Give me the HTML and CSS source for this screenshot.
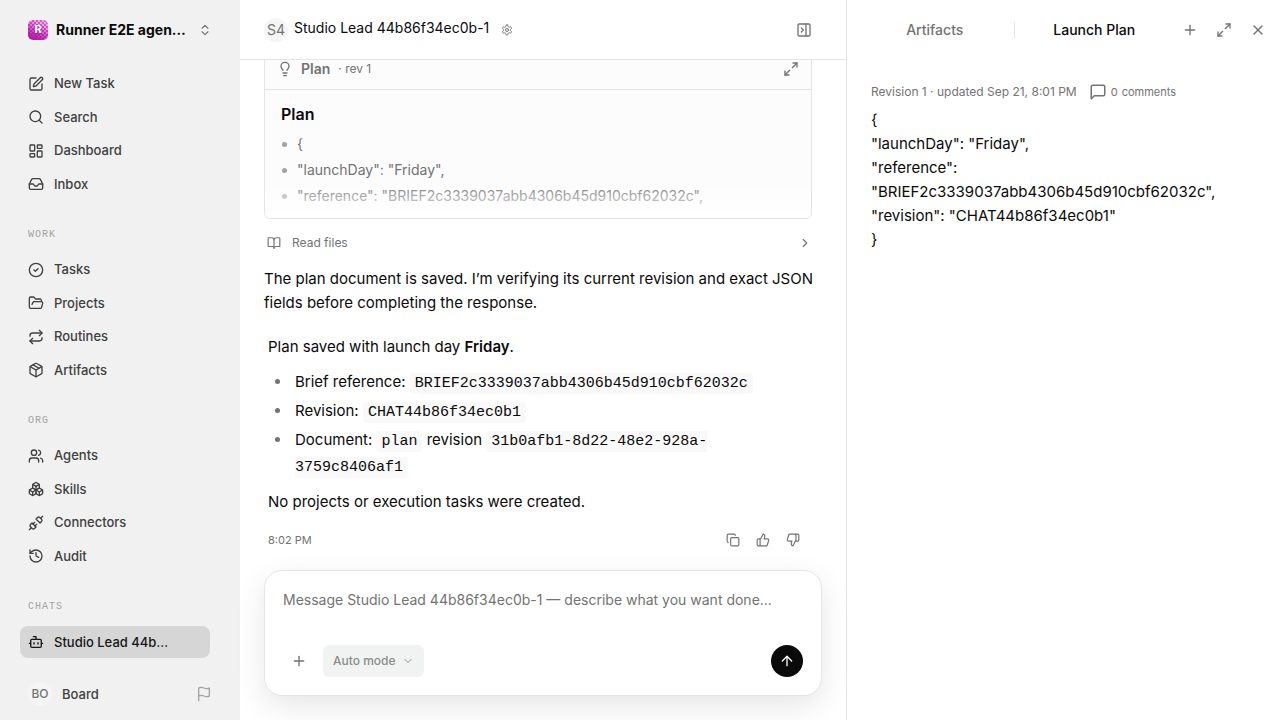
FILE: index.html
```html
<!doctype html>
<html lang="en">
  <head>
    <meta charset="utf-8">
    <title>Studio Lead 44b86f34ec0b-1</title>
    <meta name="viewport" content="width=device-width,initial-scale=1">
    <link rel="stylesheet" href="styles.css">
  </head>
  <body>
    <aside class="sidebar">
      <button class="org" type="button">
        <span class="org-logo">R</span>
        <span class="org-name">Runner E2E agen…</span>
        <svg class="icon icon-sm" viewBox="0 0 24 24"><path d="m7 15 5 5 5-5"/><path d="m7 9 5-5 5 5"/></svg>
      </button>

      <nav class="nav">
        <div class="nav-list">
          <a class="nav-item" href="#"><svg class="icon" viewBox="0 0 24 24"><path d="M12 3H5a2 2 0 0 0-2 2v14a2 2 0 0 0 2 2h14a2 2 0 0 0 2-2v-7"/><path d="M18.375 2.625a1 1 0 0 1 3 3l-9.013 9.014a2 2 0 0 1-.853.505l-2.873.84a.5.5 0 0 1-.62-.62l.84-2.873a2 2 0 0 1 .506-.852z"/></svg>New Task</a>
          <a class="nav-item" href="#"><svg class="icon" viewBox="0 0 24 24"><circle cx="11" cy="11" r="8"/><path d="m21 21-4.3-4.3"/></svg>Search</a>
          <a class="nav-item" href="#"><svg class="icon" viewBox="0 0 24 24"><rect width="7" height="9" x="3" y="3" rx="1"/><rect width="7" height="5" x="14" y="3" rx="1"/><rect width="7" height="9" x="14" y="12" rx="1"/><rect width="7" height="5" x="3" y="16" rx="1"/></svg>Dashboard</a>
          <a class="nav-item" href="#"><svg class="icon" viewBox="0 0 24 24"><path d="M22 12h-6l-2 3h-4l-2-3H2"/><path d="M5.45 5.11 2 12v6a2 2 0 0 0 2 2h16a2 2 0 0 0 2-2v-6l-3.45-6.89A2 2 0 0 0 16.76 4H7.24a2 2 0 0 0-1.79 1.11z"/></svg>Inbox</a>
        </div>

        <h2 class="nav-label">Work</h2>
        <div class="nav-list">
          <a class="nav-item" href="#"><svg class="icon" viewBox="0 0 24 24"><circle cx="12" cy="12" r="10"/><path d="m9 12 2 2 4-4"/></svg>Tasks</a>
          <a class="nav-item" href="#"><svg class="icon" viewBox="0 0 24 24"><path d="m6 14 1.5-2.9A2 2 0 0 1 9.24 10H20a2 2 0 0 1 1.94 2.5l-1.54 6a2 2 0 0 1-1.95 1.5H4a2 2 0 0 1-2-2V5a2 2 0 0 1 2-2h3.9a2 2 0 0 1 1.69.9l.81 1.2a2 2 0 0 0 1.67.9H18a2 2 0 0 1 2 2v2"/></svg>Projects</a>
          <a class="nav-item" href="#"><svg class="icon" viewBox="0 0 24 24"><path d="m17 2 4 4-4 4"/><path d="M3 11v-1a4 4 0 0 1 4-4h14"/><path d="m7 22-4-4 4-4"/><path d="M21 13v1a4 4 0 0 1-4 4H3"/></svg>Routines</a>
          <a class="nav-item" href="#"><svg class="icon" viewBox="0 0 24 24"><path d="M11 21.73a2 2 0 0 0 2 0l7-4A2 2 0 0 0 21 16V8a2 2 0 0 0-1-1.73l-7-4a2 2 0 0 0-2 0l-7 4A2 2 0 0 0 3 8v8a2 2 0 0 0 1 1.73z"/><path d="M12 22V12"/><path d="M3.29 7 12 12l8.71-5"/><path d="m7.5 4.27 9 5.15"/></svg>Artifacts</a>
        </div>

        <h2 class="nav-label">Org</h2>
        <div class="nav-list">
          <a class="nav-item" href="#"><svg class="icon" viewBox="0 0 24 24"><path d="M16 21v-2a4 4 0 0 0-4-4H6a4 4 0 0 0-4 4v2"/><circle cx="9" cy="7" r="4"/><path d="M22 21v-2a4 4 0 0 0-3-3.87"/><path d="M16 3.13a4 4 0 0 1 0 7.75"/></svg>Agents</a>
          <a class="nav-item" href="#"><svg class="icon" viewBox="0 0 24 24"><path d="M2.97 12.92A2 2 0 0 0 2 14.63v3.24a2 2 0 0 0 .97 1.71l3 1.8a2 2 0 0 0 2.06 0L12 19v-5.5l-5-3-4.03 2.42Z"/><path d="m7 16.5-4.74-2.85"/><path d="m7 16.5 5-3"/><path d="M7 16.5v5.17"/><path d="M12 13.5V19l3.97 2.38a2 2 0 0 0 2.06 0l3-1.8a2 2 0 0 0 .97-1.71v-3.24a2 2 0 0 0-.97-1.71L17 10.5l-5 3Z"/><path d="m17 16.5-5-3"/><path d="m17 16.5 4.74-2.85"/><path d="M17 16.5v5.17"/><path d="M7.97 4.42A2 2 0 0 0 7 6.13v4.37l5 3 5-3V6.13a2 2 0 0 0-.97-1.71l-3-1.8a2 2 0 0 0-2.06 0l-3 1.8Z"/><path d="M12 8 7.26 5.15"/><path d="m12 8 4.74-2.85"/><path d="M12 13.5V8"/></svg>Skills</a>
          <a class="nav-item" href="#"><svg class="icon" viewBox="0 0 24 24"><path d="m19 5 3-3"/><path d="m2 22 3-3"/><path d="M6.3 20.3a2.4 2.4 0 0 0 3.4 0L12 18l-6-6-2.3 2.3a2.4 2.4 0 0 0 0 3.4Z"/><path d="M7.5 13.5 10 11"/><path d="M10.5 16.5 13 14"/><path d="m12 6 6 6 2.3-2.3a2.4 2.4 0 0 0 0-3.4l-2.6-2.6a2.4 2.4 0 0 0-3.4 0Z"/></svg>Connectors</a>
          <a class="nav-item" href="#"><svg class="icon" viewBox="0 0 24 24"><path d="M3 12a9 9 0 1 0 9-9 9.75 9.75 0 0 0-6.74 2.74L3 8"/><path d="M3 3v5h5"/><path d="M12 7v5l4 2"/></svg>Audit</a>
        </div>

        <h2 class="nav-label">Chats</h2>
        <a class="nav-item active" href="#"><svg class="icon" viewBox="0 0 24 24"><path d="M12 8V4H8"/><rect width="16" height="12" x="4" y="8" rx="2"/><path d="M2 14h2"/><path d="M20 14h2"/><path d="M15 13v2"/><path d="M9 13v2"/></svg>Studio Lead 44b…</a>
      </nav>

      <footer class="account">
        <span class="avatar avatar-sm">BO</span>
        <span class="account-name">Board</span>
        <button class="flag" type="button" aria-label="Flag"><svg class="icon" viewBox="0 0 24 24"><path d="M4 15s1-1 4-1 5 2 8 2 4-1 4-1V3s-1 1-4 1-5-2-8-2-4 1-4 1z"/><path d="M4 22v-7"/></svg></button>
      </footer>
    </aside>

    <main class="chat">
      <header class="chat-header">
        <span class="avatar">S4</span>
        <h1>Studio Lead 44b86f34ec0b-1</h1>
        <button class="icon-button settings" type="button" aria-label="Settings"><svg class="icon icon-xs" viewBox="0 0 24 24"><path d="M12.22 2h-.44a2 2 0 0 0-2 2v.18a2 2 0 0 1-1 1.73l-.43.25a2 2 0 0 1-2 0l-.15-.08a2 2 0 0 0-2.73.73l-.22.38a2 2 0 0 0 .73 2.73l.15.1a2 2 0 0 1 1 1.72v.51a2 2 0 0 1-1 1.74l-.15.09a2 2 0 0 0-.73 2.73l.22.38a2 2 0 0 0 2.73.73l.15-.08a2 2 0 0 1 2 0l.43.25a2 2 0 0 1 1 1.73V20a2 2 0 0 0 2 2h.44a2 2 0 0 0 2-2v-.18a2 2 0 0 1 1-1.73l.43-.25a2 2 0 0 1 2 0l.15.08a2 2 0 0 0 2.73-.73l.22-.39a2 2 0 0 0-.73-2.73l-.15-.08a2 2 0 0 1-1-1.74v-.5a2 2 0 0 1 1-1.74l.15-.09a2 2 0 0 0 .73-2.73l-.22-.38a2 2 0 0 0-2.73-.73l-.15.08a2 2 0 0 1-2 0l-.43-.25a2 2 0 0 1-1-1.73V4a2 2 0 0 0-2-2z"/><circle cx="12" cy="12" r="3"/></svg></button>
        <button class="icon-button push" type="button" aria-label="Close panel"><svg class="icon" viewBox="0 0 24 24"><rect width="18" height="18" x="3" y="3" rx="2"/><path d="M15 3v18"/><path d="m8 9 3 3-3 3"/></svg></button>
      </header>

      <div class="messages">
        <section class="plan-card">
          <header class="plan-header">
            <svg class="icon" viewBox="0 0 24 24"><path d="M15 14c.2-1 .7-1.7 1.5-2.5 1-.9 1.5-2.2 1.5-3.5A6 6 0 0 0 6 8c0 1 .2 2.2 1.5 3.5.7.7 1.3 1.5 1.5 2.5"/><path d="M9 18h6"/><path d="M10 22h4"/></svg>
            <strong>Plan</strong>
            <span>· rev 1</span>
            <button class="icon-button push" type="button" aria-label="Expand plan"><svg class="icon" viewBox="0 0 24 24"><path d="M15 3h6v6"/><path d="m21 3-7 7"/><path d="m3 21 7-7"/><path d="M9 21H3v-6"/></svg></button>
          </header>
          <div class="plan-body">
            <h3>Plan</h3>
            <ul>
              <li>{</li>
              <li>"launchDay": "Friday",</li>
              <li>"reference": "BRIEF2c3339037abb4306b45d910cbf62032c",</li>
            </ul>
          </div>
        </section>

        <button class="tool-row" type="button">
          <svg class="icon icon-sm" viewBox="0 0 24 24"><path d="M12 7v14"/><path d="M3 18a1 1 0 0 1-1-1V4a1 1 0 0 1 1-1h5a4 4 0 0 1 4 4 4 4 0 0 1 4-4h5a1 1 0 0 1 1 1v13a1 1 0 0 1-1 1h-6a3 3 0 0 0-3 3 3 3 0 0 0-3-3z"/></svg>
          Read files
          <svg class="icon icon-sm push" viewBox="0 0 24 24"><path d="m9 18 6-6-6-6"/></svg>
        </button>

        <p class="status">The plan document is saved. I’m verifying its current revision and exact JSON fields before completing the response.</p>

        <article class="reply">
          <p>Plan saved with launch day <strong>Friday</strong>.</p>
          <ul>
            <li>Brief reference: <code>BRIEF2c3339037abb4306b45d910cbf62032c</code></li>
            <li>Revision: <code>CHAT44b86f34ec0b1</code></li>
            <li>Document: <code>plan</code> revision <code>31b0afb1-8d22-48e2-928a-3759c8406af1</code></li>
          </ul>
          <p>No projects or execution tasks were created.</p>
          <footer class="reply-footer">
            <time>8:02 PM</time>
            <button class="icon-button push" type="button" aria-label="Copy"><svg class="icon icon-sm" viewBox="0 0 24 24"><rect width="14" height="14" x="8" y="8" rx="2"/><path d="M4 16c-1.1 0-2-.9-2-2V4c0-1.1.9-2 2-2h10c1.1 0 2 .9 2 2"/></svg></button>
            <button class="icon-button" type="button" aria-label="Good response"><svg class="icon icon-sm" viewBox="0 0 24 24"><path d="M7 10v12"/><path d="M15 5.88 14 10h5.83a2 2 0 0 1 1.92 2.56l-2.33 8A2 2 0 0 1 17.5 22H4a2 2 0 0 1-2-2v-8a2 2 0 0 1 2-2h2.76a2 2 0 0 0 1.79-1.11L12 2a3.13 3.13 0 0 1 3 3.88Z"/></svg></button>
            <button class="icon-button" type="button" aria-label="Bad response"><svg class="icon icon-sm" viewBox="0 0 24 24"><path d="M17 14V2"/><path d="M9 18.12 10 14H4.17a2 2 0 0 1-1.92-2.56l2.33-8A2 2 0 0 1 6.5 2H20a2 2 0 0 1 2 2v8a2 2 0 0 1-2 2h-2.76a2 2 0 0 0-1.79 1.11L12 22a3.13 3.13 0 0 1-3-3.88Z"/></svg></button>
          </footer>
        </article>
      </div>

      <form class="composer">
        <textarea rows="2" aria-label="Message" placeholder="Message Studio Lead 44b86f34ec0b-1 — describe what you want done..."></textarea>
        <div class="composer-actions">
          <button class="icon-button" type="button" aria-label="Attach"><svg class="icon" viewBox="0 0 24 24"><path d="M5 12h14"/><path d="M12 5v14"/></svg></button>
          <div class="mode">
            <select aria-label="Mode"><option>Auto mode</option></select>
            <svg class="icon icon-xs" viewBox="0 0 24 24"><path d="m6 9 6 6 6-6"/></svg>
          </div>
          <button class="send push" type="submit" aria-label="Send"><svg class="icon" viewBox="0 0 24 24"><path d="m5 12 7-7 7 7"/><path d="M12 19V5"/></svg></button>
        </div>
      </form>
    </main>

    <aside class="panel">
      <header class="panel-header">
        <button class="tab" type="button">Artifacts</button>
        <button class="tab selected" type="button">Launch Plan</button>
        <div class="panel-actions">
          <button class="icon-button" type="button" aria-label="Add"><svg class="icon" viewBox="0 0 24 24"><path d="M5 12h14"/><path d="M12 5v14"/></svg></button>
          <button class="icon-button" type="button" aria-label="Expand"><svg class="icon" viewBox="0 0 24 24"><path d="M15 3h6v6"/><path d="m21 3-7 7"/><path d="m3 21 7-7"/><path d="M9 21H3v-6"/></svg></button>
          <button class="icon-button" type="button" aria-label="Close"><svg class="icon" viewBox="0 0 24 24"><path d="M18 6 6 18"/><path d="m6 6 12 12"/></svg></button>
        </div>
      </header>
      <div class="document">
        <div class="document-meta">
          <span>Revision 1 · updated Sep 21, 8:01 PM</span>
          <button class="comments" type="button"><svg class="icon icon-lg" viewBox="0 0 24 24"><path d="M21 15a2 2 0 0 1-2 2H7l-4 4V5a2 2 0 0 1 2-2h14a2 2 0 0 1 2 2z"/></svg><span>0</span> <span>comments</span></button>
        </div>
        <p>{<br>"launchDay": "Friday",<br>"reference": "BRIEF2c3339037abb4306b45d910cbf62032c",<br>"revision": "CHAT44b86f34ec0b1"<br>}</p>
      </div>
    </aside>
  </body>
</html>
```

FILE: styles.css
```css
* {
  box-sizing: border-box;
}

body {
  display: grid;
  grid-template-columns: 240px minmax(0, 1fr) minmax(0, 434px);
  height: 100vh;
  margin: 0;
  font-family: Inter, sans-serif;
  font-size: 15px;
  line-height: 24px;
  color: #0a0a0a;
  background: #fff;
}

h1, h2, h3, p, ul {
  margin: 0;
  padding: 0;
}

ul {
  list-style: none;
}

strong {
  font-weight: 600;
}

button, select, textarea {
  margin: 0;
  padding: 0;
  border: 0;
  font: inherit;
  color: inherit;
  background: none;
}

.icon {
  flex: none;
  width: 16px;
  height: 16px;
  fill: none;
  stroke: currentColor;
  stroke-width: 2;
  stroke-linecap: round;
  stroke-linejoin: round;
}

.icon-lg {
  width: 18px;
  height: 18px;
}

.icon-sm {
  width: 14px;
  height: 14px;
}

.icon-xs {
  width: 12px;
  height: 12px;
}

.icon-button {
  display: grid;
  place-items: center;
  width: 32px;
  height: 32px;
  color: #737373;
}

.push {
  margin-left: auto;
}

.avatar {
  display: grid;
  place-items: center;
  width: 24px;
  height: 24px;
  border-radius: 50%;
  font-size: 14px;
  color: #737373;
  background: #f5f5f5;
}

.avatar-sm {
  font-size: 12px;
  font-weight: 500;
}

/* sidebar */

.sidebar {
  display: flex;
  flex-direction: column;
  min-height: 0;
  background: #f1f1f1;
}

.org {
  display: flex;
  align-items: center;
  gap: 8px;
  height: 60px;
  padding: 0 28px;
  text-align: left;
}

/* dithered tile, lighter towards the top right */
.org-logo {
  width: 20px;
  height: 20px;
  border-radius: 5px;
  font-size: 11px;
  font-weight: 700;
  line-height: 19px;
  text-align: center;
  color: #fff;
  text-shadow: 0 1px 2px #0006;
  background:
    linear-gradient(25deg, #b81eac 20%, #b81eac00 75%),
    repeating-conic-gradient(#f0a6e6 0 25%, #0000 0 50%) 0 0 / 4px 4px,
    linear-gradient(25deg, #b81eac, #d76acb);
}

.org-name {
  flex: 1;
  font-size: 14px;
  font-weight: 700;
  white-space: nowrap;
}

.org .icon {
  color: #737373;
}

.nav {
  flex: 1;
  min-height: 0;
  padding: 8px 30px 0 20px;
  overflow: hidden;
}

.nav-list {
  display: grid;
  grid-auto-rows: 1fr;
  gap: 2px;
  height: 132px;
}

.nav-label {
  margin: 27px 8px 12px;
  font-family: "Liberation Mono", monospace;
  font-size: 10px;
  font-weight: 400;
  line-height: 15px;
  letter-spacing: 1px;
  text-transform: uppercase;
  color: #a3a3a3;
}

.nav-item {
  display: flex;
  align-items: center;
  gap: 10px;
  padding: 0 8px;
  border-radius: 8px;
  font-size: 13px;
  font-weight: 500;
  line-height: 19px;
  color: #404040;
  text-decoration: none;
}

.nav-item.active {
  height: 32px;
  color: #171717;
  background: #d6d6d6;
}

.account {
  display: flex;
  align-items: center;
  height: 52px;
  padding: 0 28px;
}

.account-name {
  margin-left: 10px;
  font-size: 13px;
  font-weight: 500;
  line-height: 19px;
  color: #404040;
}

.flag {
  display: grid;
  margin-left: auto;
  color: #a3a3a3;
}

/* chat */

.chat {
  display: flex;
  flex-direction: column;
  min-height: 0;
}

.chat-header {
  display: flex;
  flex: none;
  align-items: center;
  height: 60px;
  padding: 0 26px 0 24px;
  border-bottom: 1px solid #e5e5e5;
}

.chat-header h1 {
  margin: 0 2px 4px 6px;
  font-size: 14px;
  font-weight: 400;
}

.messages {
  display: flex;
  flex: 1;
  flex-direction: column;
  justify-content: flex-end;
  min-height: 0;
  padding: 0 34px 14px 24px;
  overflow: hidden;
}

.plan-card {
  flex: none;
  border: 1px solid #e5e5e5;
  border-radius: 6px;
  color: #737373;
  background: #fcfcfc;
  overflow: hidden;
}

.plan-header {
  display: flex;
  align-items: center;
  gap: 8px;
  height: 41px;
  padding: 0 4px 0 12px;
  border-bottom: 1px solid #e5e5e5;
  font-size: 12px;
}

.plan-header strong {
  font-size: 14px;
}

.plan-body {
  position: relative;
  height: 128px;
  padding: 12px 16px;
}

/* fades the clipped end of the plan */
.plan-body::after {
  content: "";
  position: absolute;
  inset: auto 0 0;
  height: 36px;
  background: linear-gradient(#fff0, #fff);
}

.plan-body h3 {
  margin-bottom: 5px;
  font-size: 16px;
  font-weight: 600;
  color: #0a0a0a;
}

.plan-body li {
  display: flex;
  align-items: center;
  gap: 10px;
  padding-left: 1px;
  font-size: 14px;
  line-height: 26px;
}

.plan-body li::before {
  content: "";
  width: 5px;
  height: 5px;
  border-radius: 50%;
  background: #a3a3a3;
}

.tool-row {
  display: flex;
  flex: none;
  align-items: center;
  gap: 11px;
  height: 48px;
  padding: 0 0 0 3px;
  font-size: 12px;
  color: #737373;
}

.status {
  margin-right: -8px;
}

.reply {
  margin-top: 20px;
  padding: 0 4px;
}

.reply ul {
  display: grid;
  gap: 3px;
  margin: 10px 0 11px;
}

.reply li {
  position: relative;
  padding-left: 27px;
  line-height: 26px;
}

.reply li::before {
  content: "";
  position: absolute;
  top: 10px;
  left: 7px;
  width: 5px;
  height: 5px;
  border-radius: 50%;
  background: #737373;
}

code {
  padding: 2px 5px;
  border-radius: 4px;
  font-family: "Liberation Mono", monospace;
  font-size: 15px;
  line-height: 18px;
  background: #f9f9f9;
}

.reply-footer {
  display: flex;
  align-items: center;
  height: 32px;
  margin-top: 10px;
}

.reply-footer .icon-button {
  width: 30px;
}

.reply-footer time {
  font-size: 11px;
  color: #737373;
}

.composer {
  flex: none;
  margin: 0 24px 24px;
  padding: 17px 18px 18px;
  border: 1px solid #e5e5e5;
  border-radius: 18px;
  background: #fff;
  box-shadow: 0 10px 30px #0000001a;
}

.composer textarea {
  display: block;
  width: 100%;
  height: 48px;
  font-size: 14px;
  line-height: 24px;
  outline: none;
  resize: none;
}

.composer textarea::placeholder {
  color: #737373;
}

.composer-actions {
  display: flex;
  align-items: center;
  gap: 8px;
  margin-top: 9px;
}

.mode {
  display: grid;
  align-items: center;
  border-radius: 6px;
  color: #8a8c8b;
  background: #f1f3f2;
}

.mode select,
.mode .icon {
  grid-area: 1 / 1;
}

.mode select {
  height: 32px;
  padding: 0 28px 0 10px;
  font-size: 12px;
  font-weight: 500;
  appearance: none;
}

.mode .icon {
  justify-self: end;
  margin-right: 10px;
  pointer-events: none;
}

.send {
  display: grid;
  place-items: center;
  width: 32px;
  height: 32px;
  border-radius: 50%;
  color: #fff;
  background: #0a0a0a;
}

/* document panel */

.panel {
  border-left: 1px solid #e5e5e5;
}

.panel-header {
  display: flex;
  align-items: center;
  height: 60px;
  padding: 0 6px 0 8px;
}

.panel-actions {
  display: flex;
  gap: 2px;
}

.tab {
  flex: 1;
  font-size: 14px;
  font-weight: 500;
  color: #737373;
}

.tab.selected {
  color: #0a0a0a;
}

.tab:first-child {
  position: relative;
}

.tab:first-child::after {
  content: "";
  position: absolute;
  top: 4px;
  right: 0;
  height: 16px;
  border-right: 1px solid #e5e5e5;
}

.document {
  padding: 20px 24px;
}

.document-meta {
  display: flex;
  align-items: center;
  gap: 12px;
  margin-bottom: 4px;
  font-size: 12px;
  color: #737373;
}

.comments {
  display: flex;
  align-items: center;
  gap: 4px;
  font-size: 11px;
}
```
